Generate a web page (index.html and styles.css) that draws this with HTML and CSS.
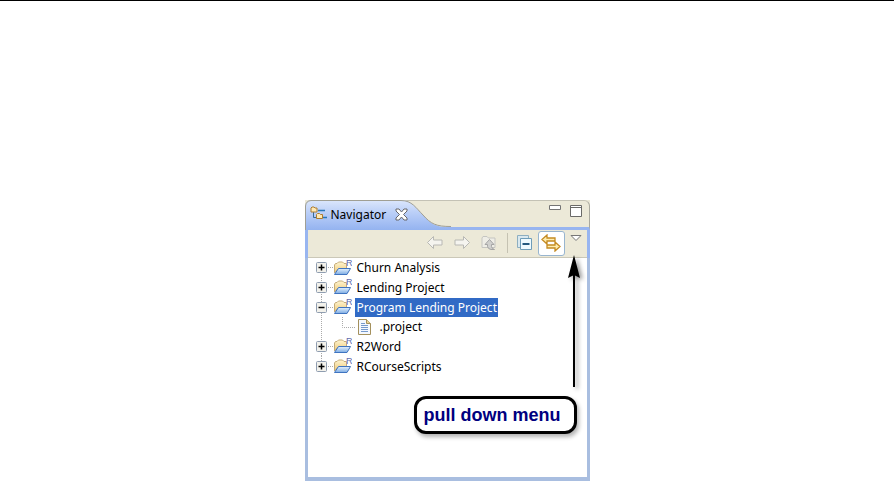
FILE: index.html
```html
<!DOCTYPE html>
<html lang="en">
<head>
  <meta charset="utf-8">
  <title>Navigator</title>
  <link rel="stylesheet" href="styles.css">
</head>
<body>
  <!-- shared icons -->
  <svg class="defs" width="0" height="0" aria-hidden="true">
    <defs>
      <linearGradient id="front" x1="0" y1="0" x2="0" y2="1">
        <stop offset="0" stop-color="#e4f2ff"/>
        <stop offset="1" stop-color="#7dabe2"/>
      </linearGradient>
      <linearGradient id="gold" x1="0" y1="0" x2="0" y2="1">
        <stop offset="0" stop-color="#fff5d0"/>
        <stop offset="1" stop-color="#edc878"/>
      </linearGradient>
      <symbol id="folder" viewBox="0 0 20 18">
        <path d="M2.500 14V6l1-1.500H5L6.500 3h4L12 4.500h2.500V10H6z" fill="url(#gold)" stroke="#c4ab78"/>
        <path d="M2.500 15.500L6.500 9.500h12l-3.500 6z" fill="url(#front)" stroke="#3f74c0"/>
        <text class="badge" x="14" y="7">R</text>
      </symbol>
      <symbol id="plus" viewBox="0 0 11 11">
        <rect x=".5" y=".5" width="10" height="10" rx="1" fill="#f3f2ec" stroke="#8f9db0"/>
        <path d="M2.500 5.500h6M5.500 2.500v6" stroke="#000" stroke-width="1.500"/>
      </symbol>
      <symbol id="minus" viewBox="0 0 11 11">
        <rect x=".5" y=".5" width="10" height="10" rx="1" fill="#f3f2ec" stroke="#8f9db0"/>
        <path d="M2.500 5.500h6" stroke="#000" stroke-width="1.500"/>
      </symbol>
    </defs>
  </svg>

  <hr class="rule">

  <div class="navigator">
    <div class="tabbar">
      <svg class="tab-shape" width="146" height="30" viewBox="0 0 146 30" aria-hidden="true">
        <defs>
          <linearGradient id="tab" x1="0" y1="0" x2="0" y2="1">
            <stop offset="0" stop-color="#dce7fc"/>
            <stop offset="0.400" stop-color="#bcd0f8"/>
            <stop offset="1" stop-color="#94b3f0"/>
          </linearGradient>
        </defs>
        <path d="M0 30V6Q1 1 6 0H96C107 0 111 8 118 15C126 24 131 27 143 27V30z" fill="url(#tab)"/>
        <path d="M0.500 30V6Q1 1 6 0.500H96C107 0.500 111 8 118 15C126 24 131 26.500 146 26.500" fill="none" stroke="#a09f94"/>
      </svg>
      <div class="tab">
        <svg width="17" height="16" viewBox="0 0 17 16" aria-hidden="true">
          <path d="M3.500 6v5.500H7" fill="none" stroke="#376b96"/>
          <path d="M8 4.500h7M13 11.500h4" stroke="#2877b8" stroke-width="1.500"/>
          <path d="M1 6V2l1-1h2l1 1h2v4z" fill="#ffe9b4" stroke="#ac7c30"/>
          <path d="M6.500 12.500v-4l1-1h2l1 1h2v4z" fill="#ffe9b4" stroke="#ac7c30"/>
        </svg>
        <span class="tab-title">Navigator</span>
        <button class="plain" aria-label="Close">
          <svg width="13" height="13" viewBox="0 0 13 13"><path d="M1 1h3l2.500 3L9 1h3v2L8.500 6.500 12 10v2H9L6.500 9 4 12H1v-2l3.500-3.500L1 3z" fill="#fff" stroke="#67676a"/></svg>
        </button>
      </div>
      <div class="window-buttons">
        <button class="plain" aria-label="Minimize">
          <svg width="12" height="12" viewBox="0 0 12 12"><path d="M.5.500h11v4H.5z" fill="#fff" stroke="#747474"/></svg>
        </button>
        <button class="plain" aria-label="Maximize">
          <svg width="12" height="12" viewBox="0 0 12 12"><path d="M.5.500h11v11H.5zM.5 2.500h11" fill="#fff" stroke="#6a6a68"/></svg>
        </button>
      </div>
    </div>

    <div class="toolbar">
      <button class="plain" aria-label="Back">
        <svg width="18" height="16" viewBox="0 0 18 16"><path d="M1.500 7.500l6-6V5h8.500v5H7.500v3.500z" fill="#f5f4ef" stroke="#b8b8b4" stroke-linejoin="round"/></svg>
      </button>
      <button class="plain" aria-label="Forward">
        <svg width="18" height="16" viewBox="0 0 18 16"><path d="M16.500 7.500l-6-6V5H2v5h8.500v3.500z" fill="#f5f4ef" stroke="#b8b8b4" stroke-linejoin="round"/></svg>
      </button>
      <button class="plain" aria-label="Up">
        <svg width="18" height="16" viewBox="0 0 18 16">
          <path d="M2 12.500V3l1-1.500h4L8.500 3H15v9.500z" fill="#eeede6" stroke="#c5c5c1"/>
          <path d="M9.500 4.500L14 9.500h-2.500v2q0 2 3 3H11q-3-.5-3.500-3v-2H5z" fill="#d0d0ce" stroke="#a5a5a5"/>
        </svg>
      </button>
      <span class="separator"></span>
      <button class="plain" aria-label="Collapse all">
        <svg width="16" height="16" viewBox="0 0 16 16">
          <path d="M.5 12.500V.5h11v12z" fill="#d9e8ef" stroke="#8daec0"/>
          <path d="M3.500 3.500h11v11h-11z" fill="#eefaff" stroke="#6e9cb8"/>
          <path d="M5.500 9h7" stroke="#23597f" stroke-width="2"/>
        </svg>
      </button>
      <button class="plain pressed" aria-label="Link with editor">
        <svg width="20" height="18" viewBox="0 0 20 18">
          <path d="M1 5.500l5-4.500v3H14v3H6v3z" fill="#ffedae" stroke="#c48a22" stroke-width="1.300"/>
          <path d="M19 12.500L14 17v-3H6v-3h8V8z" fill="#ffedae" stroke="#c48a22" stroke-width="1.300"/>
        </svg>
      </button>
      <button class="plain menu-button" aria-label="View menu">
        <svg width="12" height="7" viewBox="0 0 12 7"><path d="M1 .5h10L6 5.500z" fill="#fff" stroke="#777"/></svg>
      </button>
    </div>

    <ul class="tree">
      <li><svg class="toggle"><use href="#plus"/></svg><svg class="folder"><use href="#folder"/></svg><span class="name">Churn Analysis</span></li>
      <li><svg class="toggle"><use href="#plus"/></svg><svg class="folder"><use href="#folder"/></svg><span class="name">Lending Project</span></li>
      <li><svg class="toggle"><use href="#minus"/></svg><svg class="folder"><use href="#folder"/></svg><span class="name selected">Program Lending Project</span></li>
      <li class="child">
        <svg class="branch" width="16" height="20" viewBox="0 0 16 20" aria-hidden="true"><path d="M.5 0v10.500H13" fill="none" stroke="#aaa" stroke-dasharray="1 1"/></svg>
        <svg width="13" height="16" viewBox="0 0 13 16" aria-hidden="true">
          <path d="M.5.500h8l4 4v11H.5z" fill="#f4f8ff" stroke="#a4905c"/>
          <path d="M8.500.500v4h4" fill="#e8d39a" stroke="#a4905c"/>
          <path d="M3 4.500h4M3 6.500h7M3 8.500h7M3 10.500h7M3 12.500h7" stroke="#7599cc"/>
        </svg>
        <span class="name">.project</span>
      </li>
      <li><svg class="toggle"><use href="#plus"/></svg><svg class="folder"><use href="#folder"/></svg><span class="name">R2Word</span></li>
      <li><svg class="toggle"><use href="#plus"/></svg><svg class="folder"><use href="#folder"/></svg><span class="name">RCourseScripts</span></li>
    </ul>

    <!-- callout over the view -->
    <svg class="arrow" width="20" height="136" viewBox="0 0 20 136" aria-hidden="true">
      <path d="M8 15v117" stroke="#000" stroke-width="2"/>
      <path d="M8 0l6 23-6-3-6 3z"/>
    </svg>
    <div class="callout">pull down menu</div>
  </div>
</body>
</html>
```
FILE: styles.css
```css
* {
  box-sizing: border-box;
}

body {
  margin: 0;
  background: #fff;
  color: #000;
  font-family: "Noto Sans", Tahoma, sans-serif;
  font-size: 12px;
}

.defs {
  position: absolute;
}

.rule {
  margin: 0 0 199px;
  border: 0;
  border-top: 1px solid #000;
}

.navigator {
  position: relative;
  width: 285px;
  margin: 0 auto;
  background: #ece9d8;
}

.plain {
  display: flex;
  padding: 0;
  border: 0;
  background: none;
}

/* tab row */
.tabbar {
  position: relative;
  display: flex;
  justify-content: space-between;
  height: 30px;
  border-top: 1px solid #c4c2b5;
  border-right: 1px solid #aaa99f;
  border-bottom: 3px solid #98b5f0;
  border-radius: 6px 6px 0 0;
}

.tab-shape {
  position: absolute;
  top: -1px;
  left: 0;
}

.tab {
  position: relative;
  display: flex;
  align-items: center;
  padding-left: 5px;
}

.tab-title {
  margin: 0 9px 0 4px;
}

.window-buttons {
  display: flex;
  gap: 9px;
  padding: 4px 7px 0 0;
}

/* toolbar */
.toolbar {
  display: flex;
  align-items: center;
  justify-content: flex-end;
  gap: 9px;
  height: 28px;
  padding: 0 5px 2px 0;
  border: solid #98b5f0;
  border-width: 0 3px;
  box-shadow: inset 0 -1px #cbc8b8;
}

.separator {
  width: 1px;
  height: 20px;
  background: #c5c2b2;
}

.pressed {
  align-items: center;
  justify-content: center;
  width: 27px;
  height: 25px;
  margin: 0 -4px;
  border: 1px solid #98b5cf;
  border-radius: 3px;
  background: #fff;
}

.menu-button {
  align-self: flex-start;
  padding-top: 5px;
}

/* tree */
.tree {
  display: grid;
  grid-template-rows: repeat(6, 1fr);
  height: 223px;
  margin: 0;
  padding: 0 0 101px 8px;
  list-style: none;
  border: solid #a9bee0;
  border-width: 0 3px 4px;
  background: #fff;
}

.tree li {
  display: flex;
  align-items: center;
  min-height: 0;
  background:
    repeating-linear-gradient(#aaa 0 1px, #fff 1px 2px) 5px 0 / 1px 100% no-repeat,
    repeating-linear-gradient(90deg, #aaa 0 1px, #fff 1px 2px) 12px 50% / 6px 1px no-repeat;
}

.tree li:first-child {
  background-position: 5px 100%, 12px 50%;
  background-size: 1px 50%, 6px 1px;
}

.tree li:last-child {
  background-size: 1px 50%, 6px 1px;
}

.tree .child {
  padding-left: 26px;
  background-size: 1px 100%, 0 0;
}

.toggle {
  width: 11px;
  height: 11px;
}

.folder {
  width: 20px;
  height: 18px;
  margin-left: 5px;
}

.badge {
  fill: #5f6cac;
  font: 9px "Liberation Sans", Arial, sans-serif;
}

.name {
  margin-left: 3px;
  padding: 0 1px 0 2px;
  line-height: 19px;
}

.child .name {
  margin-left: 7px;
}

.selected {
  background: #316ac5;
  color: #fff;
}

/* callout */
.arrow {
  position: absolute;
  top: 55px;
  right: 4px;
  filter: drop-shadow(3px 2px 2px rgba(0, 0, 0, 0.4));
}

.callout {
  position: absolute;
  top: 196px;
  right: 13px;
  padding: 6px 13px 5px 7px;
  border: 3px solid #000;
  border-radius: 12px;
  background: #fff;
  color: #000080;
  font: bold 18px/21px "Liberation Sans", Arial, sans-serif;
  white-space: nowrap;
  box-shadow: 2px 3px 4px rgba(0, 0, 0, 0.3);
}
```
